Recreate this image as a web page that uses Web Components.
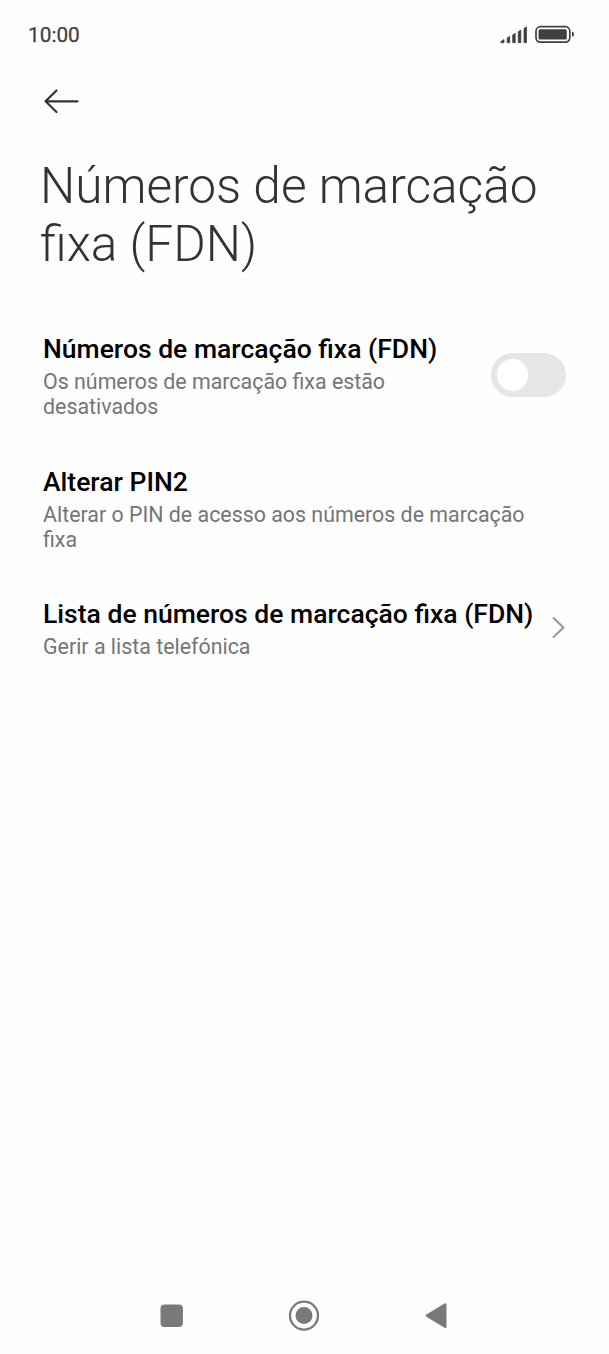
<!DOCTYPE html>
<html lang="pt"><head><meta charset="utf-8"><title>FDN</title>
<style>html,body{margin:0;background:#fefefe}</style></head><body>
<fdn-screen></fdn-screen>
<script>
const define=(name,html)=>customElements.define(name,class extends HTMLElement{
 constructor(){super();const t=document.createElement('template');t.innerHTML=html;this.attachShadow({mode:'open'}).append(t.content.cloneNode(true));}
});
define('status-bar',`<style>:host{display:flex;justify-content:space-between;height:70px;box-sizing:border-box;padding:23px 34px 0 28px;font-size:20.8px;line-height:24px;font-weight:400;color:#404040;-webkit-text-stroke:.25px #404040}svg{display:block}</style>
<span>10:00</span><svg width="75" height="24" viewBox="500 23 75 24"><g fill="#404040" stroke="#404040" stroke-width=".8" stroke-linejoin="round"><path d="M500.900 42.700V41.500L504 39.500V42.700ZM507.200 42.700V38L509.700 36.300V42.700ZM512.700 42.700V35L515.200 33.300V42.700ZM518.300 42.700V31.700L520.800 30V42.700ZM524 42.700V28.500L526.500 26.800V42.700Z"/></g><g fill="#404040"><rect x="538.500" y="29.200" width="28.300" height="10.300" rx="1.500"/><path d="M572 31.800q2 0 2 2.500t-2 2.500z"/></g><rect x="536" y="26.700" width="33.800" height="15.400" rx="4.500" fill="none" stroke="#404040" stroke-width="1.700"/></svg>`);
define('page-header',`<style>:host{display:block;padding:17px 40px 0 40px;height:239px;box-sizing:border-box;color:#333}svg{display:block}h1{margin:42px 0 0;font-size:49.600px;line-height:58px;font-weight:300;white-space:nowrap}</style>
<svg width="42" height="28" viewBox="40.500 87 42 28" fill="none" stroke="#333" stroke-width="2.200" stroke-linecap="round" stroke-linejoin="round"><path d="M46 101.300H78M57 90.500L46 101.300L57 112"/></svg><h1><slot></slot></h1>`);
define('setting-row',`<style>:host{display:flex;box-sizing:border-box;align-items:center;justify-content:space-between;padding:0 43px}div{padding-top:1px}h2{margin:0;font-size:26.520px;line-height:31px;font-weight:500;color:#000;white-space:nowrap}p{margin:5px 0 0;font-size:21.380px;line-height:25px;color:#757575;white-space:nowrap}</style>
<div><h2><slot name="title"></slot></h2><p><slot></slot></p></div><slot name="end"></slot>`);
define('toggle-switch',`<style>:host{display:flex;align-items:center;width:75.500px;height:44px;margin-bottom:1px;border-radius:22px;background:#e6e6e6;box-sizing:border-box;padding-left:6px}i{width:31.500px;height:31.500px;border-radius:50%;background:#fff}</style><i></i>`);
define('chevron-icon',`<style>:host{display:block}svg{display:block}</style><svg width="16" height="24" viewBox="550 616 16 24" fill="none" stroke="#999" stroke-width="2" stroke-linecap="round"><path d="M553.500 618L563.500 627.500L553.500 637"/></svg>`);
define('nav-bar',`<style>:host{display:grid;grid-template-columns:132px 132px 132px;justify-content:center;justify-items:center;align-items:center;height:77px;padding-right:1.500px}svg{display:block}</style>
<svg width="24" height="24" viewBox="0 0 24 24"><rect x=".5" y=".5" width="22.400" height="22.400" rx="4" fill="#797979"/></svg>
<svg width="32" height="32" viewBox="0 0 32 32"><circle cx="16" cy="15.600" r="14" fill="none" stroke="#797979" stroke-width="2.300"/><circle cx="16" cy="15.600" r="8.500" fill="#797979"/></svg>
<svg width="24" height="28" viewBox="0 0 24 28"><path d="M2.500 13.700L21.500 2.200V25.200Z" fill="#797979" stroke="#797979" stroke-width="2" stroke-linejoin="round"/></svg>`);
define('fdn-screen',`<style>:host{display:flex;flex-direction:column;width:609px;height:1354px;font-family:Roboto,sans-serif;background:#fefefe}main{flex:1}setting-row{height:133px}</style>
<status-bar></status-bar><page-header>Números de marcação<br>fixa (FDN)</page-header>
<main><setting-row><span slot="title">Números de marcação fixa (FDN)</span>Os números de marcação fixa estão<br>desativados<toggle-switch slot="end"></toggle-switch></setting-row>
<setting-row style="height:132px"><span slot="title">Alterar PIN2</span>Alterar o PIN de acesso aos números de marcação<br>fixa</setting-row>
<setting-row style="height:108px"><span slot="title">Lista de números de marcação fixa (FDN)</span>Gerir a lista telefónica<chevron-icon slot="end"></chevron-icon></setting-row></main><nav-bar></nav-bar>`);
</script></body></html>
